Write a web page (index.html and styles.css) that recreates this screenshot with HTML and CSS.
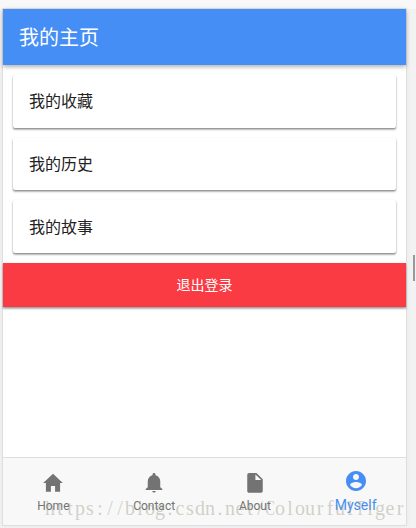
FILE: index.html
```html
<!DOCTYPE html>
<html lang="zh-CN">

<head>
    <meta charset="UTF-8">
    <meta name="viewport" content="width=device-width, initial-scale=1.0">
    <title>我的主页</title>
    <link rel="stylesheet" href="styles.css">
</head>

<body>
    <div class="phone">
        <header class="navbar">
            <h1>我的主页</h1>
        </header>

        <main class="content">
            <div class="card">我的收藏</div>
            <div class="card">我的历史</div>
            <div class="card">我的故事</div>
            <button class="logout">退出登录</button>
        </main>

        <nav class="tabs">
            <a class="tab">
                <svg viewBox="0 0 24 24">
                    <path d="M9.500 22.500v-7h5v7h6V12h3.300L12 .8.200 12h3.300v10.500z" />
                </svg>
                <span>Home</span>
            </a>
            <a class="tab">
                <svg viewBox="0 0 24 24">
                    <path d="M12 23.500c1.200 0 2.200-.8 2.200-1.800H9.800c0 1 1 1.800 2.200 1.800zM19.500 17V10c0-3.700-2.300-6.600-5.700-7.400V1.800C13.800.8 13 0 12 0s-1.800.8-1.800 1.800v.8C6.800 3.400 4.500 6.300 4.500 10v7L2 19.300v1.200h20v-1.200z" />
                </svg>
                <span>Contact</span>
            </a>
            <a class="tab">
                <svg viewBox="0 0 24 24">
                    <path d="M5 0C3.700 0 2.700 1 2.700 2.300v19.200c0 1.300 1 2.300 2.300 2.300h14c1.300 0 2.300-1 2.300-2.300V7.500L13.800 0zm7.500 8.500V1.800l7 6.700z" />
                </svg>
                <span>About</span>
            </a>
            <a class="tab active">
                <svg viewBox="0 0 24 24">
                    <path d="M12 2C6.500 2 2 6.500 2 12s4.500 10 10 10 10-4.500 10-10S17.500 2 12 2zm0 3c1.700 0 3 1.300 3 3s-1.300 3-3 3-3-1.300-3-3 1.300-3 3-3zm0 14.200c-2.500 0-4.700-1.300-6-3.200 0-2 4-3.100 6-3.100s6 1.100 6 3.100c-1.300 1.900-3.500 3.200-6 3.200z" />
                </svg>
                <span>Myself</span>
            </a>
        </nav>
    </div>

    <div class="scrollbar"></div>
    <div class="watermark" id="watermark"></div>

    <script>
        // one fixed-width cell per character
        const watermark = document.getElementById('watermark');
        for (const letra of 'https://blog.csdn.net/ColourfulTiger') {
            const span = document.createElement('span');
            span.textContent = letra;
            if (/[CT]/.test(letra)) span.className = 'wide';
            watermark.appendChild(span);
        }
    </script>
</body>

</html>
```
FILE: styles.css
```css
* {
    box-sizing: border-box;
}

body {
    margin: 0;
    padding: 9px 10px 3px 3px;
    height: 528px;
    overflow: hidden;
    background: linear-gradient(#f8f8f8 9px, #f2f2f2 9px);
    font-family: Roboto, "Noto Sans CJK SC", sans-serif;
}

.phone {
    display: flex;
    flex-direction: column;
    width: 403px;
    height: 516px;
    background: #fff;
    box-shadow: 0 0 0 1px #dedede, 0 0 6px rgba(0, 0, 0, 0.06);
}

.navbar {
    display: flex;
    align-items: center;
    height: 56px;
    padding: 0 16px 2px;
    background: #448ef6;
    color: #fff;
    box-shadow: 0 2px 4px rgba(0, 0, 0, 0.3);
}

.navbar h1 {
    margin: 0;
    font-size: 20px;
    font-weight: 400;
}

.content {
    flex: 1;
    padding-top: 10px;
}

.card {
    display: flex;
    align-items: center;
    height: 52.700px;
    margin: 0 10px 10px;
    padding: 0 16px 2px;
    border-radius: 2px;
    background: #fff;
    color: #222;
    font-size: 16px;
    box-shadow: 0 2px 2px rgba(0, 0, 0, 0.2), 0 1px 2px rgba(0, 0, 0, 0.35);
}

.logout {
    display: block;
    width: 100%;
    height: 44px;
    padding: 0 0 2px;
    border: none;
    background: #fb3b44;
    color: #fff;
    font-family: inherit;
    font-size: 14px;
    box-shadow: 0 2px 2px rgba(0, 0, 0, 0.2), 0 1px 2px rgba(0, 0, 0, 0.3);
}

.tabs {
    display: flex;
    height: 68px;
    border-top: 1px solid #dedede;
    background: #f8f8f8;
}

.tab {
    flex: 1;
    display: flex;
    flex-direction: column;
    align-items: center;
    padding-top: 15px;
    color: #737373;
    font-size: 12px;
    line-height: 16px;
}

.tab svg {
    width: 20px;
    height: 20px;
    margin-bottom: 5px;
    fill: currentColor;
}

.tab.active {
    padding-top: 11px;
    color: #448ef6;
    font-size: 14px;
}

.tab.active svg {
    width: 24px;
    height: 24px;
    margin-bottom: 4px;
}

.scrollbar {
    position: absolute;
    top: 255px;
    left: 413px;
    width: 2px;
    height: 26px;
    background: #999;
}

.watermark {
    position: absolute;
    top: 496px;
    left: 45px;
    display: flex;
    color: rgba(150, 150, 130, 0.42);
    font-family: "Liberation Serif", serif;
    font-size: 20px;
    line-height: 24px;
    pointer-events: none;
}

.watermark span {
    display: flex;
    justify-content: center;
    width: 10px;
}

.watermark .wide {
    transform: scaleX(0.75);
}
```
